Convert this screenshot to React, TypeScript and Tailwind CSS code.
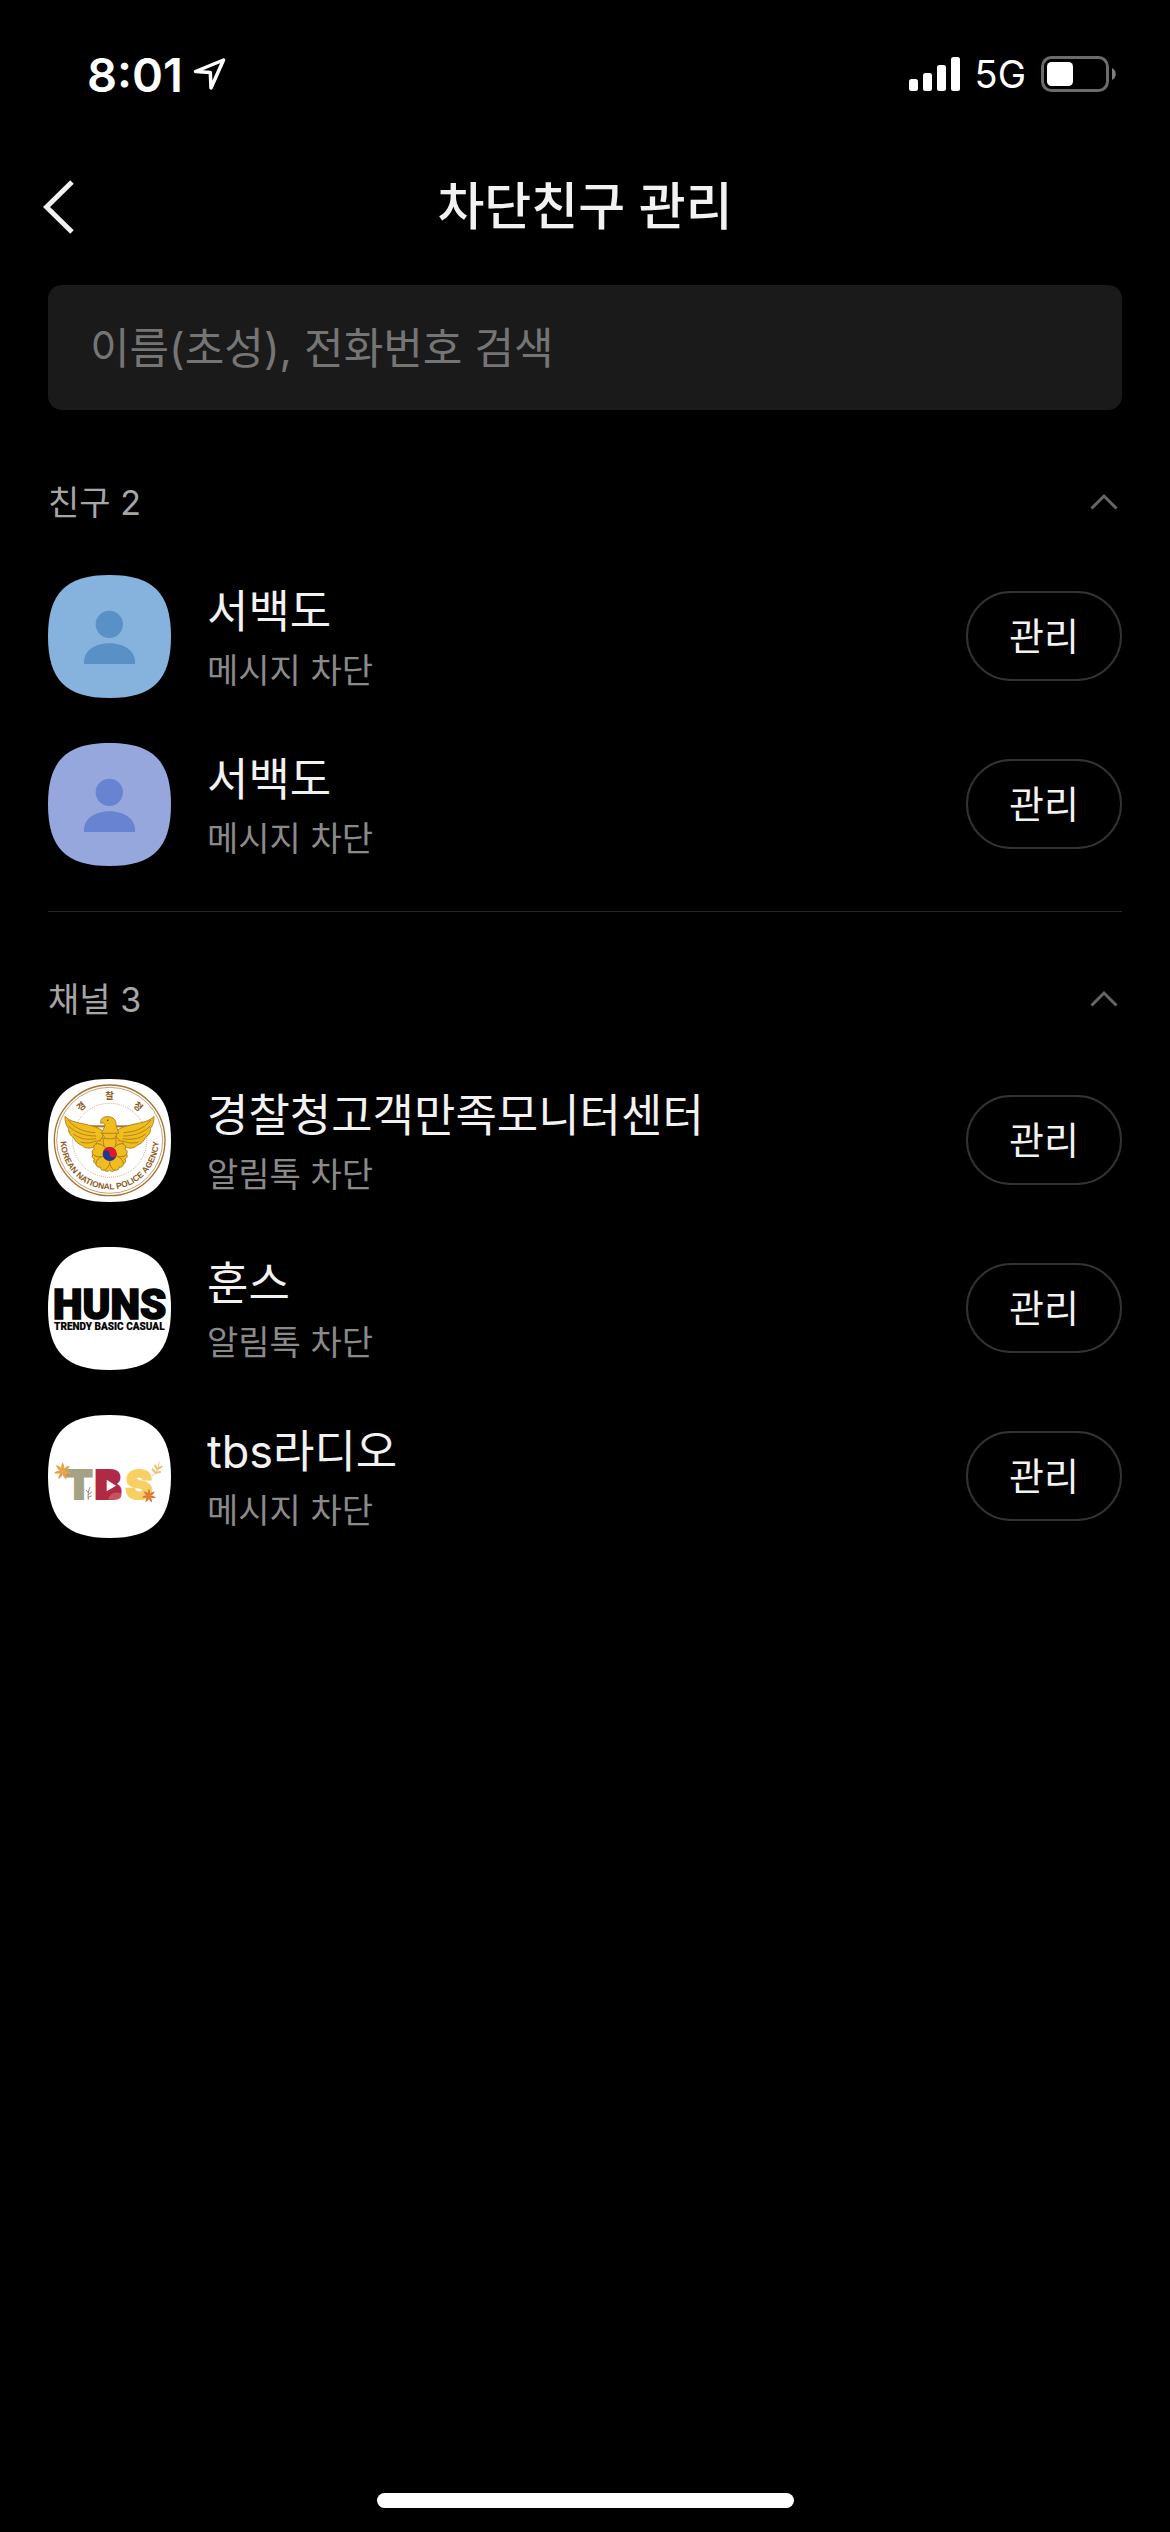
import { useId, useState } from 'react'
import type { ReactNode } from 'react'

type Entry = {
  id: number
  name: string
  status: string
  avatar: ReactNode
}

const SQUIRCLE = 'M184.5 0C315 0 369 54 369 184.5S315 369 184.5 369 0 315 0 184.5 54 0 184.5 0Z'

const PETAL = 'M209 252C192 238 184 212 194 203C201 197 206 200 209 204C212 200 217 197 224 203C234 212 226 238 209 252Z'

const FEATHERS = [
  'M84 150C104 176 134 186 166 188',
  'M86 168C108 190 138 198 168 198',
  'M100 192C120 208 146 210 168 206',
  'M122 216C140 222 156 218 170 212',
]

function Avatar({ color, children }: { color: string; children: ReactNode }) {
  const clipId = useId()
  return (
    <svg viewBox="0 0 369 369" className="size-[123px] shrink-0" aria-hidden="true">
      <clipPath id={clipId}>
        <path d={SQUIRCLE} />
      </clipPath>
      <g clipPath={`url(#${clipId})`}>
        <rect width="369" height="369" fill={color} />
        {children}
      </g>
    </svg>
  )
}

function PersonAvatar({ color, figure }: { color: string; figure: string }) {
  return (
    <Avatar color={color}>
      <circle cx="184" cy="148" r="41" fill={figure} />
      <path d="M108 267V258C110 224 146 205 184.5 205S259 224 261 258V267Z" fill={figure} />
    </Avatar>
  )
}

function Wing() {
  return (
    <g stroke="#a8761c" strokeWidth="2.5" strokeLinejoin="round">
      <path
        d="M75 139C92 158 122 158 148 166C168 170 182 176 190 186L186 208C176 222 166 232 152 234C138 236 128 230 126 226C114 222 104 212 102 204C90 196 84 184 86 176C78 166 74 152 75 139Z"
        fill="#f0bd1e"
      />
      {FEATHERS.map((d) => (
        <path key={d} d={d} fill="none" />
      ))}
    </g>
  )
}

function PoliceAvatar() {
  return (
    <Avatar color="#ffffff">
      <g transform="translate(-24 -27)">
        <g fill="none" stroke="#a9722f">
          <circle cx="209" cy="211" r="166" strokeWidth="4" />
          <circle cx="209" cy="211" r="159" strokeWidth="2" />
          <circle cx="209" cy="211" r="111" strokeWidth="2.5" strokeDasharray="2 4" />
        </g>

        {/* Wings */}
        <rect x="148" y="166" width="122" height="6" fill="#a8761c" />
        <Wing />
        <g transform="matrix(-1 0 0 1 417 0)">
          <Wing />
        </g>

        {/* Flower */}
        <g fill="#f0bd1e" stroke="#a8761c" strokeWidth="2.5">
          {[36, 108, 180, 252, 324, 0, 72, 144, 216, 288].map((angle) => (
            <path key={angle} d={PETAL} transform={`rotate(${angle} 209 252)`} />
          ))}
          <path d="M188 194L209 168L230 194L222 206H196Z" />
          {/* Head */}
          <path d="M182 160C180 146 190 139 204 140C220 140 228 150 228 164L236 190H184L196 166L190 158Z" />
        </g>
        <circle cx="203" cy="151" r="2.5" fill="#5d3c0c" />

        <circle cx="209" cy="252" r="21" fill="#20368f" />
        <path d="M188 252A21 21 0 0 1 230 252A10.5 10.5 0 0 1 209 252A10.5 10.5 0 0 0 188 252Z" fill="#e0182d" />

        <path id="police-arc" d="M62 190V211A147 147 0 0 0 356 211V190" fill="none" />
        <text fill="#8c5a1e" className="font-['Liberation_Sans',sans-serif] text-[25px] font-bold" textAnchor="middle">
          <textPath href="#police-arc" startOffset="50%">
            KOREAN NATIONAL POLICE AGENCY
          </textPath>
        </text>
        <g fill="#8c5a1e" textAnchor="middle" className="font-['Noto_Sans_CJK_KR',sans-serif] text-[28px] font-bold">
          <text x="209" y="88">찰</text>
          <text x="209" y="88" transform="rotate(-40 209 211)">경</text>
          <text x="209" y="88" transform="rotate(40 209 211)">청</text>
        </g>
      </g>
    </Avatar>
  )
}

function HunsAvatar() {
  return (
    <Avatar color="#ffffff">
      <g fill="#050505" stroke="#050505" textAnchor="middle" className="font-['Roboto',sans-serif] font-black">
        <text x="185" y="216" strokeWidth="5" className="text-[126px]">HUNS</text>
        <text x="184" y="249" strokeWidth="0.5" className="text-[30px]">TRENDY BASIC CASUAL</text>
      </g>
    </Avatar>
  )
}

function Leaf({ x, y, size, color }: { x: number; y: number; size: number; color: string }) {
  return (
    <g transform={`translate(${x} ${y}) scale(${size})`} fill={color}>
      {[0, 52, 104, 156, 208, 260, 312].map((angle) => (
        <path key={angle} d="M0 0C-7 -8 -5 -18 0 -27C5 -18 7 -8 0 0Z" transform={`rotate(${angle})`} />
      ))}
    </g>
  )
}

function TbsAvatar() {
  return (
    <Avatar color="#ffffff">
      <g transform="translate(-24 -525)">
        <g strokeWidth="6" className="font-['Inter',sans-serif] text-[120px] font-black">
          <text x="76" y="776" fill="#a3a383" stroke="#a3a383">T</text>
          <text x="164" y="776" fill="#b02a45" stroke="#b02a45">B</text>
          <text x="257" y="776" fill="#f7cf63" stroke="#f7cf63">S</text>
        </g>
        <rect x="180" y="700" width="50" height="68" rx="8" fill="#b02a45" />
        <path d="M205 779C205 764 222 752 244 760C246 770 240 779 228 779Z" fill="#c9525c" />
        <path d="M200 719L228 737L200 754Z" fill="#ffffff" />
        <Leaf x={68} y={694} size={1} color="#e5a246" />
        <Leaf x={327} y={768} size={0.8} color="#d9772f" />
        <g fill="none" stroke="#efc074" strokeWidth="6" strokeLinecap="round">
          <path d="M337 708C350 698 356 684 357 666" strokeWidth="3" />
          <path d="M346 698L338 688M352 688L345 677M348 698L360 696M354 686L365 680" />
        </g>
        <g fill="none" stroke="#8f8f70" strokeWidth="3" strokeLinecap="round">
          <path d="M145 778C143 762 145 752 150 742" />
          <path d="M145 758L139 751M145 764L155 756M144 772L154 768" />
        </g>
      </g>
    </Avatar>
  )
}

const friends: Entry[] = [
  { id: 1, name: '서백도', status: '메시지 차단', avatar: <PersonAvatar color="#86b3de" figure="#5991c7" /> },
  { id: 2, name: '서백도', status: '메시지 차단', avatar: <PersonAvatar color="#95a7dd" figure="#6783d1" /> },
]

const channels: Entry[] = [
  { id: 3, name: '경찰청고객만족모니터센터', status: '알림톡 차단', avatar: <PoliceAvatar /> },
  { id: 4, name: '훈스', status: '알림톡 차단', avatar: <HunsAvatar /> },
  { id: 5, name: 'tbs라디오', status: '메시지 차단', avatar: <TbsAvatar /> },
]

function StatusBar() {
  return (
    <div className="flex h-[148px] items-center justify-between pr-[54px] pl-[87px] text-white">
      <div className="flex items-center gap-[10px]">
        <span className="text-[47px] leading-none font-semibold">8:01</span>
        <svg viewBox="0 0 33 33" className="size-[33px]" fill="none" stroke="currentColor" strokeWidth="3.5" strokeLinejoin="round" aria-hidden="true">
          <path d="M2.5 13.5L30.5 2L18 30L17.3 14.5Z" />
        </svg>
      </div>
      <div className="flex items-center gap-[15px]">
        <svg viewBox="0 0 51 34" className="h-[34px] w-[51px]" fill="currentColor" aria-hidden="true">
          <rect y="22" width="9" height="12" rx="2.5" />
          <rect x="14" y="16" width="9" height="18" rx="2.5" />
          <rect x="28" y="8" width="9" height="26" rx="2.5" />
          <rect x="42" width="9" height="34" rx="2.5" />
        </svg>
        <span className="text-[38px] leading-none">5G</span>
        <svg viewBox="0 0 75 36" className="h-9 w-[75px]" aria-hidden="true">
          <rect x="1.5" y="1.5" width="65" height="33" rx="9" fill="none" stroke="#6b6b6b" strokeWidth="3" />
          <rect x="6" y="6" width="26" height="24" rx="4.5" fill="#ffffff" />
          <path d="M71 12C76 14 76 22 71 24Z" fill="#7d7d7d" />
        </svg>
      </div>
    </div>
  )
}

function EntryRow({ entry }: { entry: Entry }) {
  return (
    <li className="flex h-[168px] items-center gap-9">
      {entry.avatar}
      <div className="min-w-0 flex-1 pt-1">
        <p className="truncate text-[45px] leading-[66px] text-[#f2f2f2]">{entry.name}</p>
        <p className="truncate text-[34px] leading-[52px] text-[#8a8a8a]">{entry.status}</p>
      </div>
      <button
        type="button"
        aria-label={`${entry.name} 관리`}
        className="h-[90px] w-[156px] shrink-0 rounded-full border-2 border-[#333333] text-[38px] leading-none text-[#f2f2f2]"
      >
        관리
      </button>
    </li>
  )
}

function Section({ title, entries, className }: { title: string; entries: Entry[]; className: string }) {
  const [open, setOpen] = useState(true)
  return (
    <section className={className}>
      <div className="flex h-[101px] items-center justify-between">
        <h2 className="pt-0.5 text-[34px] text-[#a6a6a6]">
          {title} {entries.length}
        </h2>
        <button type="button" aria-label={title} aria-expanded={open} onClick={() => setOpen(!open)} className="p-1">
          <svg viewBox="0 0 28 18" className={`h-[18px] w-7 ${open ? '' : 'rotate-180'}`} fill="none" stroke="#666666" strokeWidth="3" aria-hidden="true">
            <path d="M1.5 15.5L14 3L26.5 15.5" />
          </svg>
        </button>
      </div>
      {open && (
        <ul>
          {entries.map((entry) => (
            <EntryRow key={entry.id} entry={entry} />
          ))}
        </ul>
      )}
    </section>
  )
}

export default function App() {
  return (
    <div className="flex min-h-screen flex-col bg-black font-['Inter','Noto_Sans_CJK_KR',sans-serif]">
      <StatusBar />

      <header className="grid h-[118px] grid-cols-[96px_1fr_96px] items-center">
        <button type="button" aria-label="뒤로" className="pl-[43px]">
          <svg viewBox="0 0 31 54" className="h-[54px] w-[31px]" fill="none" stroke="#f2f2f2" strokeWidth="5" aria-hidden="true">
            <path d="M29 2L3.5 27L29 52" />
          </svg>
        </button>
        <h1 className="text-center text-[51px] font-medium text-[#f2f2f2]">차단친구 관리</h1>
      </header>

      <main className="px-12 pt-[19px]">
        <input
          type="search"
          aria-label="이름(초성), 전화번호 검색"
          placeholder="이름(초성), 전화번호 검색"
          className="h-[125px] w-full rounded-[14px] bg-[#1a1a1a] px-[42px] text-[43px] text-[#f2f2f2] placeholder:text-[#757575]"
        />
        <Section title="친구" entries={friends} className="mt-[41px] border-b border-[#262626] pb-[23px]" />
        <Section title="채널" entries={channels} className="mt-9 [&>ul]:mt-[7px]" />
      </main>

      <div className="mt-auto flex justify-center pb-6">
        <div className="h-[15px] w-[417px] rounded-full bg-white" />
      </div>
    </div>
  )
}
